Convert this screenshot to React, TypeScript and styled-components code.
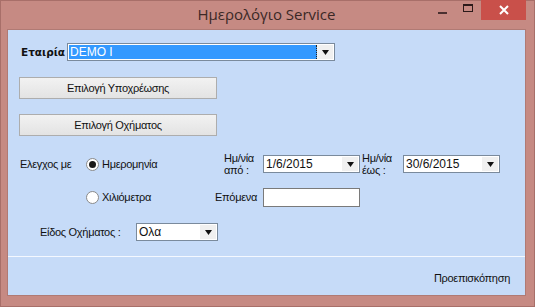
import styled, { createGlobalStyle } from "styled-components";

const GlobalStyle = createGlobalStyle`
  html, body {
    margin: 0;
    padding: 0;
    background: #c68a83;
  }
  body {
    font-family: "Liberation Sans", Arial, sans-serif;
    font-size: 11px;
    letter-spacing: -0.3px;
    color: #111;
  }
`;

function Arrow() {
  return (
    <svg width="7" height="5" viewBox="0 0 7 5">
      <path d="M0 0 H7 L3.5 5 Z" fill="#111" />
    </svg>
  );
}

interface ComboProps {
  value: string;
  width: number;
  selected?: boolean;
}

function Combo({ value, width, selected }: ComboProps) {
  return (
    <ComboBox $width={width}>
      <ComboText $selected={selected}>{value}</ComboText>
      <DropButton>
        <Arrow />
      </DropButton>
    </ComboBox>
  );
}

function App() {
  return (
    <>
      <GlobalStyle />
      <Window>
        <TitleBar>
          <Title>Ημερολόγιο Service</Title>
          <Controls>
            <CtrlButton>
              <MinIcon />
            </CtrlButton>
            <CtrlButton>
              <MaxIcon />
            </CtrlButton>
            <CloseButton>
              <svg width="10" height="10" viewBox="0 0 10 10">
                <path d="M1 1 L9 9 M9 1 L1 9" stroke="#fff" strokeWidth="2" />
              </svg>
            </CloseButton>
          </Controls>
        </TitleBar>
        <Client>
          <MainArea>
            <CompanyRow>
              <BoldLabel>Εταιρία</BoldLabel>
              <Combo value="DEMO I" width={268} selected />
            </CompanyRow>
            <WideButton $top={16}>Επιλογή Υποχρέωσης</WideButton>
            <WideButton $top={15}>Επιλογή Οχήματος</WideButton>
            <OptionsGrid>
              <Label>Ελεγχος με</Label>
              <Radio>
                <RadioDot $checked />
                Ημερομηνία
              </Radio>
              <TwoLine>
                Ημ/νία
                <br />
                από :
              </TwoLine>
              <Combo value="1/6/2015" width={97} />
              <TwoLine>
                Ημ/νία
                <br />
                έως :
              </TwoLine>
              <Combo value="30/6/2015" width={97} />

              <span />
              <Radio>
                <RadioDot />
                Χιλιόμετρα
              </Radio>
              <NextLabel>Επόμενα</NextLabel>
              <TextBox />
            </OptionsGrid>
            <TypeRow>
              <TypeLabel>Είδος Οχήματος :</TypeLabel>
              <Combo value="Ολα" width={82} />
            </TypeRow>
          </MainArea>
          <Footer>
            <FooterLink>Προεπισκόπηση</FooterLink>
          </Footer>
        </Client>
      </Window>
    </>
  );
}

export default App;

const Window = styled.div`
  width: 535px;
  height: 307px;
  box-sizing: border-box;
  background: #c68a83;
  border: 1px solid #a86f69;
  padding: 0 8px 10px 6px;
  display: flex;
  flex-direction: column;
`;

const TitleBar = styled.div`
  height: 28px;
  position: relative;
  display: flex;
  align-items: center;
  justify-content: center;
  flex-shrink: 0;
`;

const Title = styled.div`
  font-family: "Open Sans", "DejaVu Sans", sans-serif;
  font-size: 15px;
  letter-spacing: 0;
  color: #3b2826;
  margin-top: -2px;
`;

const Controls = styled.div`
  position: absolute;
  right: 0;
  top: -1px;
  display: flex;
  align-items: flex-start;
`;

const CtrlButton = styled.div`
  width: 26px;
  height: 20px;
  display: flex;
  align-items: center;
  justify-content: center;
`;

const MinIcon = styled.div`
  width: 9px;
  height: 2px;
  background: #4a3030;
  margin-top: 6px;
`;

const MaxIcon = styled.div`
  width: 8px;
  height: 5px;
  border: 1px solid #2c1a1a;
  border-top-width: 2px;
  margin-top: -4px;
`;

const CloseButton = styled.div`
  width: 45px;
  height: 20px;
  background: #c9504a;
  display: flex;
  align-items: center;
  justify-content: center;
`;

const Client = styled.div`
  flex: 1;
  background: #c6dbf8;
  border: 1px solid #b07a74;
  display: flex;
  flex-direction: column;
`;

const MainArea = styled.div`
  height: 226px;
  box-sizing: border-box;
  padding: 13px 0 0 11px;
  display: flex;
  flex-direction: column;
`;

const CompanyRow = styled.div`
  display: flex;
  align-items: center;
  gap: 5px;
  padding-left: 2px;
`;

const BoldLabel = styled.span`
  font-family: "DejaVu Sans", sans-serif;
  font-weight: bold;
  font-size: 10.5px;
  letter-spacing: 0;
  width: 41px;
`;

const ComboBox = styled.div<{ $width: number }>`
  width: ${(p) => p.$width}px;
  height: 18px;
  box-sizing: border-box;
  border: 1px solid #7a8a9c;
  background: #fff;
  display: flex;
  padding: 1px;
`;

const ComboText = styled.div<{ $selected?: boolean }>`
  flex: 1;
  background: ${(p) => (p.$selected ? "#3399ff" : "#fff")};
  color: ${(p) => (p.$selected ? "#fff" : "#111")};
  border-right: ${(p) => (p.$selected ? "1px dotted #222" : "none")};
  line-height: 14px;
  padding-left: 1px;
  font-size: 12px;
  letter-spacing: 0;
`;

const DropButton = styled.div`
  width: 16px;
  background: #f0f0f0;
  display: flex;
  align-items: center;
  justify-content: center;
`;

const WideButton = styled.div<{ $top: number }>`
  margin-top: ${(p) => p.$top}px;
  width: 198px;
  height: 22px;
  box-sizing: border-box;
  border: 1px solid #adadad;
  background: linear-gradient(#f2f2f2, #e3e3e3);
  display: flex;
  align-items: center;
  justify-content: center;
`;

const OptionsGrid = styled.div`
  margin-top: 16px;
  margin-left: 1px;
  display: grid;
  grid-template-columns: 66px 136px 41px 97px 43px 97px;
  grid-template-rows: 24px 18px;
  row-gap: 12px;
  align-items: center;
`;

const Label = styled.span``;

const Radio = styled.label`
  display: flex;
  align-items: center;
  gap: 3px;
`;

const RadioDot = styled.span<{ $checked?: boolean }>`
  width: 11px;
  height: 11px;
  border-radius: 50%;
  border: 1px solid #8a8a8a;
  background: #fff;
  display: inline-flex;
  align-items: center;
  justify-content: center;
  &::after {
    content: "";
    width: 7px;
    height: 7px;
    border-radius: 50%;
    background: ${(p) => (p.$checked ? "#1a1a1a" : "transparent")};
  }
`;

const TwoLine = styled.span`
  line-height: 12px;
  padding-left: 2px;
  align-self: start;
`;

const NextLabel = styled.span`
  margin-left: -7px;
`;

const TextBox = styled.div`
  width: 97px;
  height: 19px;
  box-sizing: border-box;
  border: 1px solid #7a7a7a;
  background: #fff;
`;

const TypeRow = styled.div`
  margin-top: 17px;
  margin-left: 21px;
  display: flex;
  align-items: center;
`;

const TypeLabel = styled.span`
  width: 96px;
`;

const Footer = styled.div`
  flex: 1;
  border-top: 1px solid #f4f8ff;
  display: flex;
  align-items: center;
  justify-content: flex-end;
  padding-right: 15px;
  padding-top: 4px;
`;

const FooterLink = styled.span``;
